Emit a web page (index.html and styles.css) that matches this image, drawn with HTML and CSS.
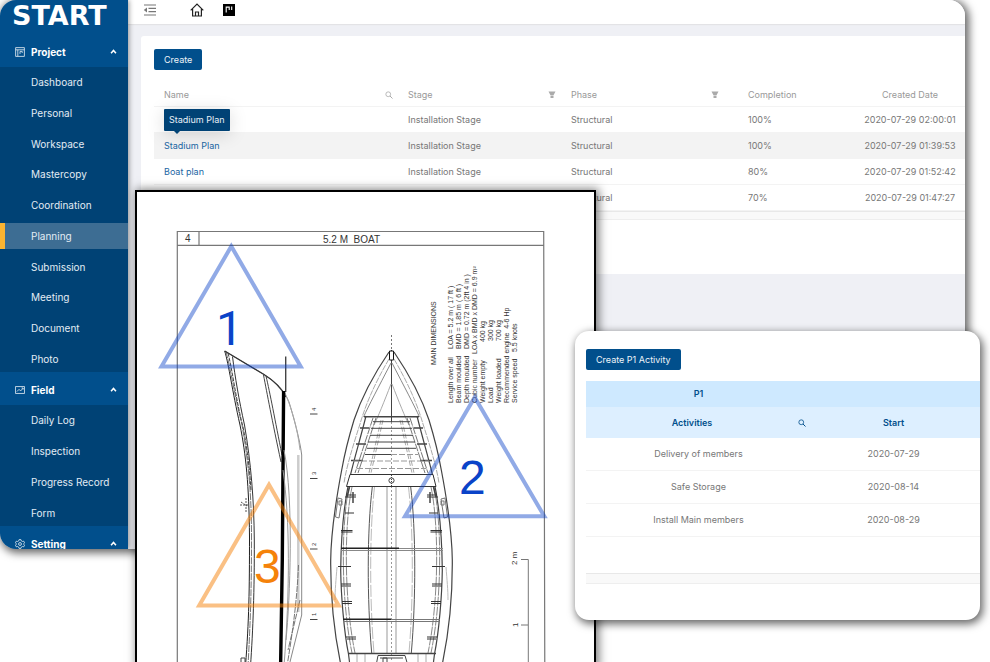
FILE: index.html
```html
<!DOCTYPE html>
<html lang="en">
<head>
<meta charset="utf-8">
<title>Start – Planning</title>
<link rel="stylesheet" href="styles.css">
</head>
<body>
<svg class="defs" aria-hidden="true">
  <symbol id="i-search" viewBox="0 0 16 16"><circle cx="6.5" cy="6.5" r="4.8" fill="none" stroke="currentColor" stroke-width="1.6"/><path d="M10 10l5 5" stroke="currentColor" stroke-width="2"/></symbol>
  <symbol id="i-filter" viewBox="0 0 16 16"><path d="M1 1h14l-4 7.500H5zM5 9.700h6V14H5z" fill="currentColor"/></symbol>
  <symbol id="i-up" viewBox="0 0 10 10"><path d="M1.500 7.500L5 3.500l3.500 4" fill="none" stroke="currentColor" stroke-width="2.200"/></symbol>
</svg>
<div class="stage">
  <div class="app">
    <aside class="sidebar">
      <div class="logo">START</div>
      <nav>
        <button class="section" type="button">
          <svg viewBox="0 0 16 16"><path d="M1 1h14v14H1zM1 4.500h14M4.500 4.500V15M8 7v4M11.500 7v2.500M8 7h3.500" fill="none" stroke="currentColor" stroke-width="1.400"/></svg>
          <span>Project</span><svg class="caret"><use href="#i-up"/></svg>
        </button>
        <div class="submenu submenu-project">
          <a href="#">Dashboard</a><a href="#">Personal</a><a href="#">Workspace</a><a href="#">Mastercopy</a><a href="#">Coordination</a><a href="#" class="active">Planning</a><a href="#">Submission</a><a href="#">Meeting</a><a href="#">Document</a><a href="#">Photo</a>
        </div>
        <button class="section" type="button">
          <svg viewBox="0 0 16 16"><path d="M0.700 2.500h14.600v11H0.700zM3 10.500l3.500-3.500 2.500 2.500 4-4.500M10.500 4.800H13v2.500" fill="none" stroke="currentColor" stroke-width="1.400"/></svg>
          <span>Field</span><svg class="caret"><use href="#i-up"/></svg>
        </button>
        <div class="submenu submenu-field">
          <a href="#">Daily Log</a><a href="#">Inspection</a><a href="#">Progress Record</a><a href="#">Form</a>
        </div>
        <button class="section" type="button">
          <svg viewBox="0 0 16 16"><path d="M6.500 1h3l.6 2 1.700 1 2.100-.5 1.500 2.600L14 7.500v1l1.400 1.400-1.500 2.600-2.100-.5-1.700 1-.6 2h-3l-.6-2-1.700-1-2.100.5L.6 9.900 2 8.500v-1L.6 6.100l1.500-2.600 2.100.5 1.700-1z" fill="none" stroke="currentColor" stroke-width="1.400"/><circle cx="8" cy="8" r="2.300" fill="none" stroke="currentColor" stroke-width="1.400"/></svg>
          <span>Setting</span><svg class="caret"><use href="#i-up"/></svg>
        </button>
      </nav>
    </aside>
    <div class="main">
      <header class="topbar">
        <button type="button" aria-label="Collapse menu"><svg viewBox="0 0 14 14"><path d="M1 2h12M5.500 5.300H13M5.500 8.600H13M1 12h12" stroke="#777" stroke-width="1.200"/><path d="M4 4.500v5L.8 7z" fill="#777"/></svg></button>
        <button type="button" aria-label="Home"><svg viewBox="0 0 14 14"><path d="M.7 7.300L7 1l6.300 6.300M2.600 6v7h8.800V6M5.500 13V9h3v4" fill="none" stroke="#222" stroke-width="1.200"/></svg></button>
        <button type="button" aria-label="Boards"><svg viewBox="0 0 14 14"><path d="M1 1h12v12H1z" fill="#000"/><path d="M4.200 3.500v6M4.200 4.100h3v3M9.700 3.500v3.500" fill="none" stroke="#fff" stroke-width="1.100"/></svg></button>
      </header>
      <section class="panel">
        <button class="primary" type="button">Create</button>
        <table class="plans">
          <colgroup><col class="c-name"><col class="c-mid"><col class="c-mid"><col class="c-done"><col></colgroup>
          <thead><tr>
            <th><div>Name<svg><use href="#i-search"/></svg></div></th>
            <th><div>Stage<svg><use href="#i-filter"/></svg></div></th>
            <th><div>Phase<svg><use href="#i-filter"/></svg></div></th>
            <th class="done">Completion</th><th class="date">Created Date</th>
          </tr></thead>
          <tbody>
            <tr><td></td><td>Installation Stage</td><td>Structural</td><td class="done">100%</td><td class="date">2020-07-29 02:00:01</td></tr>
            <tr class="hover"><td class="tipped"><a href="#">Stadium Plan</a><span class="tip" role="tooltip">Stadium Plan</span></td><td>Installation Stage</td><td>Structural</td><td class="done">100%</td><td class="date">2020-07-29 01:39:53</td></tr>
            <tr><td><a href="#">Boat plan</a></td><td>Installation Stage</td><td>Structural</td><td class="done">80%</td><td class="date">2020-07-29 01:52:42</td></tr>
            <tr><td></td><td></td><td>Structural</td><td class="done">70%</td><td class="date">2020-07-29 01:47:27</td></tr>
          </tbody>
        </table>
        <div class="track"></div>
      </section>
    </div>
  </div>

  <figure class="drawing">
    <svg viewBox="137 192 457 474" fill="none" stroke="#444" role="img" aria-label="5.2 M boat plan">
      <g stroke-width="1.200">
        <path d="M177.300 670V231.500H543.700L544.800 670M177 245.300H544M199 231.500V245" stroke="#777"/>
      </g>
      <g class="t-title"><text x="185" y="242">4</text><text x="323" y="243">5.2 M&#160; BOAT</text></g>

      <!-- side profile -->
      <g stroke-width="1">
        <path d="M224.700 351C229 365 232 390 240 425C246 455 249 485 249.500 537C249.500 590 249 620 245.500 666" stroke="#222"/>
        <path d="M226 351.500C231 371 235 397 242 425C248 460 251.500 490 251.500 537C251.500 590 250.500 620 248 666" stroke="#777" stroke-dasharray="7 1"/>
        <path d="M228 353C233 373 236 400 243 427C248 452 250 475 251 490" stroke="#444" stroke-dasharray="4 1"/>
        <path d="M232.500 356.500C235 377 239 400 244.500 425C251 463 254 500 254.300 540C254.500 590 253 630 250.500 666" stroke="#333"/>
        <path d="M224.700 351L264 374.500C276 382 284 390 289 402C293 415 300 440 301.700 455V615L289 666" stroke="#888"/>
        <path d="M224.700 351L264 374.500C276 382 282 389 286 397" stroke="#333" stroke-width="1.300"/>
        <path d="M285 393C291 407 297 425 300 450" stroke="#aaa"/>
        <path d="M263.500 375C267 393 272 420 281 462M266 376C270 393 275 420 282 455" stroke="#444"/>
        <path d="M285.700 356.500V392" stroke="#444" stroke-width="1.400"/>
        <path d="M283.600 391L282.300 560L280.600 666" stroke="#000" stroke-width="3.400"/>
        <path d="M283 470C290 520 290 590 284 666M284 450C294 500 290 600 286 640" stroke="#999"/>
        <path d="M298.300 455V612" stroke="#ccc" stroke-width="2.500"/>
        <path d="M298.500 565C297 600 293 630 287 666M300 600L288 650" stroke="#777" stroke-dasharray="6 1"/>
        <path d="M310 414H317.500M310 478.500H317.500M310 549H317.500M310 619.500H317.500" stroke="#444"/>
        <path d="M240 505H248M241 502L247 506M246 498V512" stroke="#555" stroke-dasharray="2 1"/>
        <path d="M241 658h4v5h-4z" stroke="#444"/>
      </g>
      <g class="t-mark"><text transform="translate(316 411) rotate(-90)">4</text><text transform="translate(316 475) rotate(-90)">3</text><text transform="translate(316 546) rotate(-90)">2</text><text transform="translate(316 616) rotate(-90)">1</text></g>

      <!-- plan view -->
      <path d="M391.500 335V350" stroke="#777" stroke-dasharray="2 2"/>
      <path d="M391.500 350V422" stroke="#444"/>
      <path d="M391.500 422V666" stroke="#999" stroke-dasharray="2 2"/>
      <path d="M389.500 351h4v9h-4z" stroke="#111" fill="#fff"/>
      <g id="half">
        <path d="M389 352C370 380 360 402 354 420C347 443 344 457 341.700 470C336 500 331 535 330.700 560C330.500 588 333 630 342 670" stroke="#444" stroke-width="1.200"/>
        <path d="M389 359C372 388 364 410 360 424C350 455 346 470 344 483" stroke="#aaa" stroke-dasharray="6 1"/>
        <path d="M391 363C378 388 369 405 363.500 417" stroke="#888"/>
        <path d="M391 384C384 402 378 417 374 425" stroke="#aaa"/>
        <path d="M366 416C360 440 353 463 350 477C343 507 341 540 340.700 570C341 595 344 632 348.500 654L350 666" stroke="#444" stroke-width="1.200"/>
        <path d="M376 418L358 473M373 418L355 473" stroke="#777" stroke-dasharray="8 1"/>
        <path d="M383 420L371 473M381 420L369 473" stroke="#aaa" stroke-dasharray="5 2"/>
        <path d="M352 487C344 525 344 600 355 653M349 487C341 525 341 600 352 653" stroke="#888" stroke-dasharray="9 1"/>
        <path d="M372.300 487C367 530 367 600 371.700 653" stroke="#555"/>
        <path d="M374.500 487C369.500 530 369.500 600 374 653" stroke="#bbb" stroke-dasharray="12 2"/>
        <path d="M387 487V653" stroke="#999"/>
        <path d="M346 495H356M345 497H356M345 513H354M341 530.500H352.500M341 532H352.500M338 566.500H351M341 584H351M341 586H351M342 601.500H352M342 603.500H352M346 637H356M347 639H356" stroke="#333"/>
        <path d="M360 428H369M356 444H366M351 460.500H363" stroke="#444" stroke-width="1.400"/>
        <path d="M338 498L342 499L339 518L335.500 517zM339 501h3v4h-3z" stroke="#777"/>
        <path d="M337 567C336 580 335 590 335 600" stroke="#bbb"/>
        <path d="M349.500 487L347 497M353 492V503" stroke="#444" stroke-width="1.500"/>
        <path d="M357 654V666M365 654V666" stroke="#aaa"/>
      </g>
      <use href="#half" transform="matrix(-1 0 0 1 783 0)"/>
      <g stroke="#444">
        <path d="M364 416.700H419" stroke-width="1.400"/>
        <path d="M373 421.700H410M371 428.300H412M370 435.300H413M368 442H415M367 448.300H416M365 454.500H391"/>
        <path d="M391 454.500H418M353 461H429M357 468.500H426" stroke="#999" stroke-dasharray="6 2"/>
        <path d="M350 474.500H433L436 486.500H346.500z" fill="#fff" stroke="#333"/>
        <circle cx="391.500" cy="480.500" r="2.600"/><path d="M391.500 475V486" stroke-dasharray="1 1"/>
        <path d="M341 548.300H399" stroke="#222" stroke-width="1.600"/><path d="M341 550.500H443M399 548.500H443" stroke="#888"/>
        <path d="M343 619.300H391" stroke="#222" stroke-width="1.600"/><path d="M343 621.500H440M391 619.500H440" stroke="#777"/>
        <path d="M348 653.500H436" stroke-width="1.400"/>
        <path d="M376 666L378 655.500H405L408 666M380 658H403M383 666V658H387V666"/>
      </g>

      <!-- scale -->
      <path d="M521 559.500H528.300V670M521 625H528" stroke="#777"/>
      <g class="t-scale"><text transform="translate(517 565) rotate(-90)">2 m</text><text transform="translate(518 627) rotate(-90)">1</text></g>

      <g class="t-spec">
        <text transform="translate(436 365) rotate(-90)">MAIN DIMENSIONS</text>
        <g transform="translate(453 403) rotate(-90)">
          <text y="0">Length over all</text><text x="54" y="0">LOA = 5.2 m ( 17 ft )</text>
          <text y="8">Beam moulded</text><text x="54" y="8">BMD = 1.85 m ( 6 ft )</text>
          <text y="16">Depth moulded</text><text x="54" y="16">DMD = 0.72 m (2ft 4 in )</text>
          <text y="24">Cubic number</text><text x="49" y="24">LOA x BMD x DMD = 6.9 m²</text>
          <text y="32">Weight empty</text><text x="61" y="32">400 kg</text>
          <text y="40">Load</text><text x="62" y="40">300 kg</text>
          <text y="48">Weight loaded</text><text x="62" y="48">700 kg</text>
          <text y="56">Recommended engine&#160; 4-6 Hp</text>
          <text y="64">Service speed</text><text x="51" y="64">5.5 knots</text>
        </g>
      </g>

      <!-- markers -->
      <g stroke-width="4" stroke-linejoin="miter">
        <path d="M231.300 246.300L161.500 366.500H300.700z" stroke="#0a43c8" stroke-opacity=".45"/>
        <path d="M474.700 397.300L405 516.300H544.300z" stroke="#0a43c8" stroke-opacity=".45"/>
        <path d="M269 484.700L199.200 605.500H338.700z" stroke="#f5820a" stroke-opacity=".5"/>
      </g>
      <g class="t-marker"><text class="one" x="216" y="345">1</text><text x="459" y="494">2</text><text class="orange" x="254" y="583">3</text></g>
    </svg>
  </figure>

  <section class="activity">
    <button class="primary" type="button">Create P1 Activity</button>
    <table>
      <colgroup><col class="c-act"><col></colgroup>
      <thead>
        <tr class="group"><th>P1</th><th></th></tr>
        <tr><th><div>Activities<svg><use href="#i-search"/></svg></div></th><th>Start</th></tr>
      </thead>
      <tbody>
        <tr><td>Delivery of members</td><td>2020-07-29</td></tr>
        <tr><td>Safe Storage</td><td>2020-08-14</td></tr>
        <tr><td>Install Main members</td><td>2020-08-29</td></tr>
      </tbody>
    </table>
    <div class="track"></div>
  </section>
</div>
</body>
</html>
```
FILE: styles.css
```css
* { box-sizing: border-box; }
body { margin: 0; background: #fff; color: #777; font: 9px/12px Inter, "Liberation Sans", sans-serif; }
a { color: inherit; text-decoration: none; }
button { font: inherit; border: 0; padding: 0; background: none; color: inherit; cursor: pointer; }
table { border-collapse: separate; border-spacing: 0; table-layout: fixed; width: 100%; }
th { font-weight: 400; text-align: left; }
.defs { display: none; }

.stage { position: relative; min-height: 100vh; overflow: hidden; }
.app { display: flex; min-height: 549px; max-height: 549px; margin-right: 25px; border-radius: 16px; overflow: hidden; background: #eff0f5; box-shadow: 2px 2px 8px 2px rgba(0, 0, 0, .6); }

.sidebar { flex: 0 0 128px; background: #014f8c; color: #e3ecf4; font-size: 10px; box-shadow: 1px 0 5px rgba(0, 0, 0, .4); z-index: 1; }
.logo { height: 36px; padding-left: 12px; font: 700 27px/32px "DejaVu Sans", sans-serif; color: #fff; }
.section { display: flex; align-items: center; gap: 6px; width: 100%; height: 31px; padding: 0 11px 0 15px; color: #fff; font-weight: 700; text-align: left; }
.section svg { width: 10px; height: 10px; opacity: .85; }
.section span { flex: 1; }
.section .caret { width: 7px; height: 7px; opacity: 1; }
.submenu { display: flex; flex-direction: column; justify-content: space-between; padding-top: 2px; background: #004275; }
.submenu + .section { height: 33px; padding-top: 2px; }
.submenu-project { height: 305px; }
.submenu-field { height: 121px; }
.submenu a { padding-left: 31px; line-height: 26px; }
.submenu .active { padding-left: 26px; border-left: 5px solid #fbb431; background: #3d6d93; }

.main { flex: 1; min-width: 0; }
.topbar { display: flex; align-items: flex-start; height: 24px; padding: 3px 15px; background: #fff; box-shadow: 0 1px 1px #e3e3e6; }
.topbar button { width: 15px; height: 14px; margin-right: 32px; }
.topbar button + button { margin-right: 17px; }
.topbar svg { display: block; width: 14px; height: 14px; }
.panel { margin: 12px 0 0 13px; padding: 13px 0 54px 13px; border-radius: 3px 0 0 0; background: #fff; }
.primary { display: block; height: 21px; padding: 0 10px; border-radius: 2px; background: #014f8c; color: #eef4f9; }

.plans { margin-top: 12px; }
.c-name { width: 244px; }
.c-mid { width: 163px; }
.c-done { width: 131px; }
.plans th, .plans td { height: 26px; padding: 0 10px; border-bottom: 1px solid #f3f3f3; white-space: nowrap; }
.plans th { height: 25px; padding: 2px 5px 0 10px; color: #999; }
.plans th div { display: flex; justify-content: space-between; align-items: center; }
.plans th svg { width: 8px; height: 8px; color: #aaa; }
.plans .done { padding-left: 24px; }
.plans .date { padding-left: 0; padding-right: 0; text-align: center; }
.plans a { color: #1a66a3; }
.hover td { background: #f3f3f3; }
.tipped { position: relative; }
.tip { position: absolute; left: 10px; bottom: 27px; padding: 5px; border-radius: 1px; background: #004275; color: #e8f0f7; box-shadow: 0 3px 18px rgba(0, 0, 0, .15); }
.tip::after { content: ""; position: absolute; left: 10px; top: 100%; border: 3px solid transparent; border-top-color: #004275; border-bottom: 0; }
.track { height: 9px; background: #f9f9f9; border-top: 1px solid #e8e8e8; border-bottom: 1px solid #eee; }

.drawing { position: absolute; left: 135px; top: 190px; width: 461px; margin: 0; border: 2px solid #000; background: #fff; box-shadow: 2px 0 9px 1px rgba(0, 0, 0, .5); }
.drawing > svg { display: block; width: 100%; }
.drawing text { stroke: none; fill: #333; font-family: "Liberation Sans", sans-serif; }
.t-title text { font-size: 10px; }
.t-mark text { font-size: 6px; }
.t-scale text { font-size: 8px; }
.t-spec text { font-size: 7px; }
.drawing .t-marker text { font-size: 48px; fill: #0a43c8; }
.drawing .t-marker .one { font-family: Roboto, sans-serif; }
.drawing .t-marker .orange { fill: #f5820a; }

.activity { position: absolute; left: 575px; right: 10px; top: 331px; padding: 18px 0 36px 11px; border-radius: 14px; overflow: hidden; background: #fff; box-shadow: 2px 3px 9px 1px rgba(0, 0, 0, .6); }
.activity table { margin: 11px 0 36px; }
.activity .track { height: 11px; }
.c-act { width: 225px; }
.activity th, .activity td { height: 33px; padding: 0 4px 0 0; text-align: center; border-bottom: 1px solid #f3f3f3; }
.activity td:first-child, .activity .group th { padding: 0; }
.activity th { height: 31px; border: 0; background: #ddefff; color: #014f8c; font-weight: 600; }
.activity .group th { height: 26px; background: #cee9ff; }
.activity th div { display: grid; grid-template-columns: 1fr auto; align-items: center; padding: 0 1px 0 0; }
.activity th svg { width: 8px; height: 8px; }
```
